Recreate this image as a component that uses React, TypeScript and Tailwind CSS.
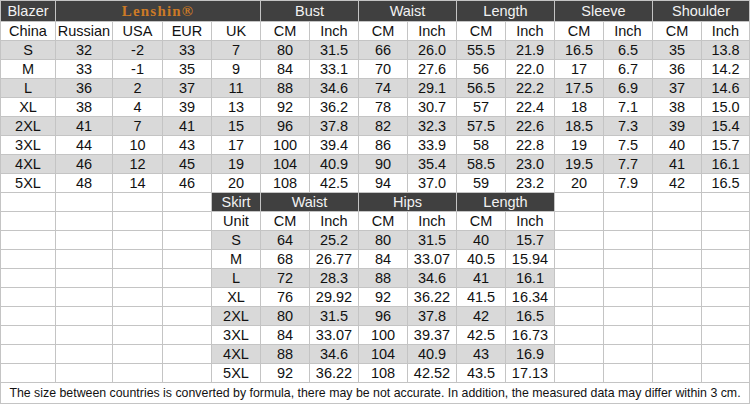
import React from 'react';

const blazer: string[][] = [
  ['S', '32', '-2', '33', '7', '80', '31.5', '66', '26.0', '55.5', '21.9', '16.5', '6.5', '35', '13.8'],
  ['M', '33', '-1', '35', '9', '84', '33.1', '70', '27.6', '56', '22.0', '17', '6.7', '36', '14.2'],
  ['L', '36', '2', '37', '11', '88', '34.6', '74', '29.1', '56.5', '22.2', '17.5', '6.9', '37', '14.6'],
  ['XL', '38', '4', '39', '13', '92', '36.2', '78', '30.7', '57', '22.4', '18', '7.1', '38', '15.0'],
  ['2XL', '41', '7', '41', '15', '96', '37.8', '82', '32.3', '57.5', '22.6', '18.5', '7.3', '39', '15.4'],
  ['3XL', '44', '10', '43', '17', '100', '39.4', '86', '33.9', '58', '22.8', '19', '7.5', '40', '15.7'],
  ['4XL', '46', '12', '45', '19', '104', '40.9', '90', '35.4', '58.5', '23.0', '19.5', '7.7', '41', '16.1'],
  ['5XL', '48', '14', '46', '20', '108', '42.5', '94', '37.0', '59', '23.2', '20', '7.9', '42', '16.5'],
];

const skirt: string[][] = [
  ['S', '64', '25.2', '80', '31.5', '40', '15.7'],
  ['M', '68', '26.77', '84', '33.07', '40.5', '15.94'],
  ['L', '72', '28.3', '88', '34.6', '41', '16.1'],
  ['XL', '76', '29.92', '92', '36.22', '41.5', '16.34'],
  ['2XL', '80', '31.5', '96', '37.8', '42', '16.5'],
  ['3XL', '84', '33.07', '100', '39.37', '42.5', '16.73'],
  ['4XL', '88', '34.6', '104', '40.9', '43', '16.9'],
  ['5XL', '92', '36.22', '108', '42.52', '43.5', '17.13'],
];

const blazerUnits = ['China', 'Russian', 'USA', 'EUR', 'UK', 'CM', 'Inch', 'CM', 'Inch', 'CM', 'Inch', 'CM', 'Inch', 'CM', 'Inch'];
const skirtUnits = ['Unit', 'CM', 'Inch', 'CM', 'Inch', 'CM', 'Inch'];

const Cell: React.FC<{ children?: React.ReactNode; className?: string }> = ({ children, className = 'bg-white' }) => (
  <div className={`flex items-center justify-center whitespace-nowrap leading-none ${className}`}>{children}</div>
);

const Head: React.FC<{ children?: React.ReactNode; className?: string }> = ({ children, className = '' }) => (
  <div className={`flex items-center justify-center whitespace-nowrap leading-none bg-[#404040] text-[#f2f2f2] ${className}`}>
    {children}
  </div>
);

export default function App() {
  return (
    <div
      className="w-[750px] h-[404px] overflow-hidden bg-[#c4c4c4] p-px grid gap-px grid-cols-[54px_56px_49px_48px_48px_48px_48px_48px_48px_48px_48px_48px_48px_48px_47px] grid-rows-[20px_repeat(19,18px)_20px] text-[14.5px] text-[#111]"
      style={{ fontFamily: '"Liberation Sans", Arial, sans-serif' }}
    >
      {/* Blazer header */}
      <Head>Blazer</Head>
      <Head className="col-span-4">
        <span
          className="text-[15px] font-bold tracking-[1.2px] text-[#cc7a26]"
          style={{ fontFamily: '"Liberation Serif", "Times New Roman", serif' }}
        >
          Lenshin®
        </span>
      </Head>
      <Head className="col-span-2">Bust</Head>
      <Head className="col-span-2">Waist</Head>
      <Head className="col-span-2">Length</Head>
      <Head className="col-span-2">Sleeve</Head>
      <Head className="col-span-2">Shoulder</Head>

      {blazerUnits.map((u, i) => (
        <Cell key={`bu${i}`}>{u}</Cell>
      ))}

      {blazer.map((row, r) =>
        row.map((v, c) => (
          <Cell key={`b${r}-${c}`} className={r % 2 === 0 ? 'bg-[#d9d9d9]' : 'bg-white'}>
            {v}
          </Cell>
        ))
      )}

      {/* Skirt header row */}
      <Cell />
      <Cell />
      <Cell />
      <Cell />
      <Head>Skirt</Head>
      <Head className="col-span-2">Waist</Head>
      <Head className="col-span-2">Hips</Head>
      <Head className="col-span-2">Length</Head>
      <Cell />
      <Cell />
      <Cell />
      <Cell />

      {/* Skirt unit row */}
      <Cell />
      <Cell />
      <Cell />
      <Cell />
      {skirtUnits.map((u, i) => (
        <Cell key={`su${i}`}>{u}</Cell>
      ))}
      <Cell />
      <Cell />
      <Cell />
      <Cell />

      {skirt.map((row, r) => (
        <React.Fragment key={`s${r}`}>
          <Cell />
          <Cell />
          <Cell />
          <Cell />
          {row.map((v, c) => (
            <Cell key={`s${r}-${c}`} className={r % 2 === 0 ? 'bg-[#d9d9d9]' : 'bg-white'}>
              {v}
            </Cell>
          ))}
          <Cell />
          <Cell />
          <Cell />
          <Cell />
        </React.Fragment>
      ))}

      {/* Footer note */}
      <div className="col-span-15 flex items-center justify-center bg-white text-[12.35px] whitespace-nowrap leading-none">
        The size between countries is converted by formula, there may be not accurate. In addition, the measured data may differ within 3 cm.
      </div>
    </div>
  );
}
